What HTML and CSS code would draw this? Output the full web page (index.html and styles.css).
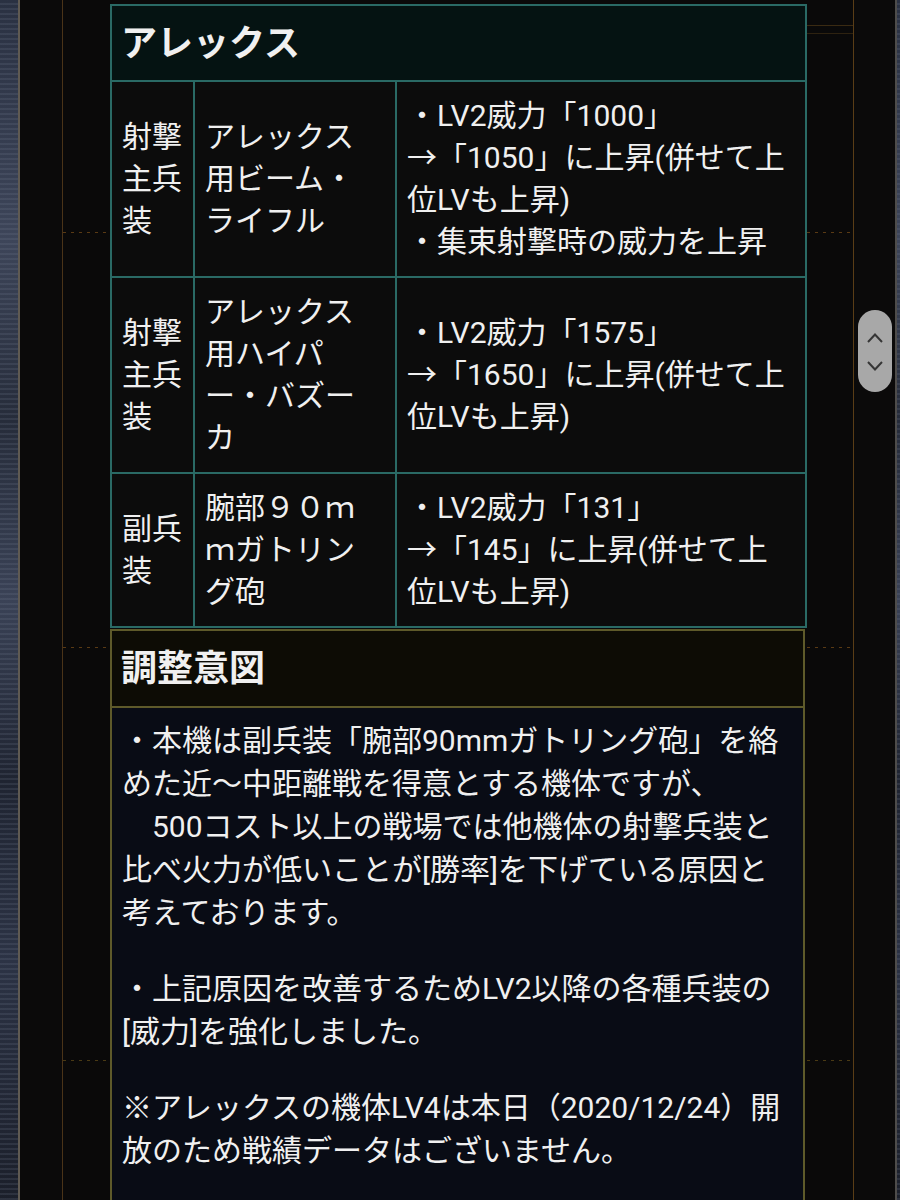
FILE: index.html
```html
<!DOCTYPE html>
<html lang="ja">
<head>
<meta charset="utf-8">
<title>アレックス 調整</title>
<link rel="stylesheet" href="styles.css">
</head>
<body>
<div class="page">
  <div class="bg-strip bg-left"></div>
  <div class="frame">
    <div class="inner">
      <div class="content">
        <table class="spec">
          <colgroup>
            <col class="c1"><col class="c2"><col class="c3">
          </colgroup>
          <thead>
            <tr><th colspan="3">アレックス</th></tr>
          </thead>
          <tbody>
            <tr>
              <td>射撃<br>主兵<br>装</td>
              <td>アレックス<br>用ビーム・<br>ライフル</td>
              <td>・LV2威力「1000」<br>→「1050」に上昇(併せて上<br>位LVも上昇)<br>・集束射撃時の威力を上昇</td>
            </tr>
            <tr>
              <td>射撃<br>主兵<br>装</td>
              <td>アレックス<br>用ハイパ<br>ー・バズー<br>カ</td>
              <td>・LV2威力「1575」<br>→「1650」に上昇(併せて上<br>位LVも上昇)</td>
            </tr>
            <tr>
              <td>副兵<br>装</td>
              <td>腕部９０ｍ<br>ｍガトリン<br>グ砲</td>
              <td>・LV2威力「131」<br>→「145」に上昇(併せて上<br>位LVも上昇)</td>
            </tr>
          </tbody>
        </table>
        <section class="intent">
          <h2 class="intent-head">調整意図</h2>
          <div class="intent-body">
            <p>・本機は副兵装「腕部90mmガトリング砲」を絡<br>めた近〜中距離戦を得意とする機体ですが、<br>　500コスト以上の戦場では他機体の射撃兵装と<br>比べ火力が低いことが[勝率]を下げている原因と<br>考えております。</p>
            <p>・上記原因を改善するためLV2以降の各種兵装の<br>[威力]を強化しました。</p>
            <p>※アレックスの機体LV4は本日（2020/12/24）開<br>放のため戦績データはございません。</p>
          </div>
        </section>
      </div>
    </div>
  </div>
  <div class="bg-strip bg-right"></div>
  <div class="scroll-btn">
    <svg width="34" height="82" viewBox="0 0 34 82" aria-hidden="true">
      <polyline points="10,32 17,24.5 24,32" fill="none" stroke="#363636" stroke-width="2"/>
      <polyline points="10,52 17,59.5 24,52" fill="none" stroke="#363636" stroke-width="2"/>
    </svg>
  </div>
</div>
</body>
</html>
```

FILE: styles.css
```css
html, body {
  margin: 0;
  padding: 0;
  background: #0a0a0a;
}

body {
  font-family: Roboto, "Noto Sans CJK JP", sans-serif;
  color: #f0f0f0;
}

.page {
  position: relative;
  display: flex;
  width: 900px;
  height: 1200px;
  overflow: hidden;
}

.bg-strip {
  flex: none;
  background:
    repeating-linear-gradient(0deg, rgba(120,130,150,0.18) 0 2px, transparent 2px 5px),
    linear-gradient(180deg, #2a3142 0%, #3d4559 20%, #262c3a 35%, #3a4256 50%, #1f2431 65%, #2c3345 80%, #1b1f2a 100%);
}

.bg-left { width: 18px; }
.bg-right { width: 5px; }

.frame {
  flex: 1;
  display: flex;
  border-left: 2px solid #5f5a52;
  border-right: 2px solid #4e4c4a;
  background: #0b0a0a;
}

.inner {
  flex: 1;
  margin: 0 41px 0 42px;
  border-left: 1px solid #4a3318;
  border-right: 1px solid #5a3d16;
  background:
    repeating-linear-gradient(90deg, #5a3a14 0 3px, transparent 3px 8px) 0 232px / 100% 1px no-repeat,
    repeating-linear-gradient(90deg, #5a3a14 0 3px, transparent 3px 8px) 0 647px / 100% 1px no-repeat,
    repeating-linear-gradient(90deg, #4a3a14 0 3px, transparent 3px 8px) 0 1060px / 100% 1px no-repeat,
    linear-gradient(#3a2a12, #3a2a12) right 0 top 25px / 46px 1px no-repeat,
    linear-gradient(#2e2210, #2e2210) right 0 top 33px / 46px 1px no-repeat,
    #0a0909;
}

.content {
  padding: 4px 46px 0 47px;
}

/* ---------- spec table ---------- */
.spec {
  width: 695px;
  border-collapse: collapse;
  table-layout: fixed;
  background: #0c0c0c;
}

.spec .c1 { width: 83px; }
.spec .c2 { width: 202px; }
.spec .c3 { width: 410px; }

.spec th,
.spec td {
  border: 2px solid #2a6a65;
}

.spec th {
  background: #051312;
  text-align: left;
  font-size: 36px;
  font-weight: 700;
  line-height: 50px;
  padding: 13px 10px 11px 9px;
}

.spec td {
  font-size: 30px;
  line-height: 42px;
  padding: 13px 8px 13px 10px;
  vertical-align: middle;
  white-space: nowrap;
}

/* ---------- intent box ---------- */
.intent {
  margin-top: 1px;
  border: 2px solid #5e5a2a;
  width: 691px;
}

.intent-head {
  margin: 0;
  background: #0d0c05;
  border-bottom: 2px solid #5e5a2a;
  font-size: 36px;
  font-weight: 700;
  line-height: 50px;
  padding: 13px 10px 12px 9px;
}

.intent-body {
  background: #090c15;
  padding: 11px 10px 60px 10px;
  font-size: 30px;
  line-height: 43px;
  white-space: nowrap;
}

.intent-body p {
  margin: 0 0 33px 0;
}

/* ---------- scroll button overlay ---------- */
.scroll-btn {
  position: absolute;
  left: 858px;
  top: 310px;
  width: 34px;
  height: 82px;
  border-radius: 17px;
  background: #a8a8a8;
}

.scroll-btn svg {
  display: block;
}
```
